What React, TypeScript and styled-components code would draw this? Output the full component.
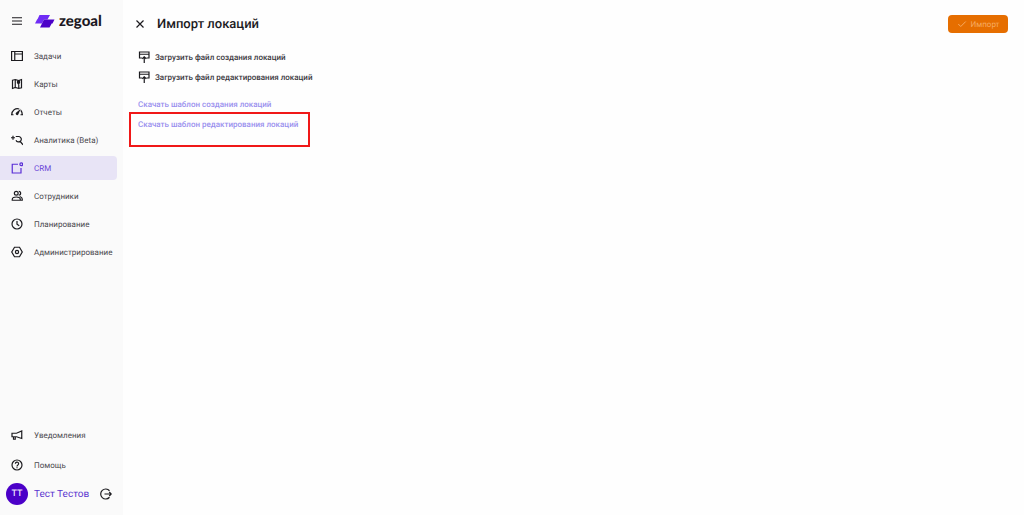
import React from "react";
import styled, { createGlobalStyle, css } from "styled-components";

const GlobalStyle = createGlobalStyle`
  * { box-sizing: border-box; }
  body {
    margin: 0;
    background: #fefefe;
    color: #1c1b1f;
    font-family: Roboto, "Liberation Sans", sans-serif;
    text-rendering: geometricPrecision;
  }
  button { font-family: inherit; text-rendering: inherit; }
`;

const Page = styled.div`
  display: flex;
  min-height: 100vh;
`;

const Sidebar = styled.aside`
  flex: 0 0 123px;
  display: flex;
  flex-direction: column;
  background: #fafafa;
`;

const Brand = styled.div`
  display: flex;
  align-items: center;
  gap: 12px;
  height: 42px;
  padding-left: 11px;
`;

const IconButton = styled.button`
  display: flex;
  flex: none;
  padding: 0;
  border: 0;
  background: none;
  color: #1c1b1f;
  cursor: pointer;
`;

const Logo = styled.a`
  display: flex;
  align-items: center;
  gap: 4px;
  color: #1b1722;
  font: 900 15px/20px Lato, sans-serif;
  text-decoration: none;
`;

const NavList = styled.ul<{ $gap: number }>`
  display: flex;
  flex-direction: column;
  gap: ${(p) => p.$gap}px;
  margin: 0;
  padding: 2px 6px 0 0;
  list-style: none;
`;

const NavLink = styled.a<{ $active?: boolean }>`
  display: flex;
  align-items: center;
  gap: 11px;
  height: 24px;
  padding-left: 11px;
  border-radius: 0 4px 4px 0;
  color: #4a484e;
  font-size: 8px;
  line-height: 13px;
  text-decoration: none;
  white-space: nowrap;
  svg { color: #1c1b1f; }
  ${(p) =>
    p.$active &&
    css`
      background: #e8e4f6;
      color: #6a45d6;
      svg { color: #5a2fd6; }
    `}
`;

const SidebarFooter = styled.div`
  margin-top: auto;
`;

const User = styled.div`
  display: flex;
  align-items: center;
  height: 38px;
  padding: 0 11px 4px 6px;
`;

const Avatar = styled.span`
  display: grid;
  place-items: center;
  width: 22px;
  height: 22px;
  border-radius: 50%;
  background: #4b00c8;
  color: #e9defa;
  font-size: 9px;
  font-weight: 500;
`;

const UserName = styled.span`
  flex: 1;
  margin-left: 6px;
  color: #5b35d0;
  font-size: 10px;
  white-space: nowrap;
`;

const Main = styled.main`
  flex: 1;
  min-width: 0;
`;

const Header = styled.header`
  display: flex;
  align-items: center;
  gap: 11px;
  height: 47px;
  padding: 1px 16px 0 11px;
`;

const Title = styled.h1`
  flex: 1;
  margin: 0;
  padding-top: 2px;
  font-size: 13px;
  font-weight: 500;
  line-height: 20px;
`;

const ImportButton = styled.button`
  display: flex;
  align-items: center;
  justify-content: center;
  gap: 4px;
  width: 60px;
  height: 18px;
  padding: 0;
  border: 0;
  border-radius: 4px;
  background: #e66e00;
  color: #f6ab62;
  font-size: 8px;
  font-weight: 400;
`;

const Actions = styled.div`
  display: flex;
  flex-direction: column;
  align-items: flex-start;
  padding: 0 15px;
`;

const UploadButton = styled.button`
  display: flex;
  align-items: center;
  gap: 5px;
  height: 20px;
  padding: 0;
  border: 0;
  background: none;
  color: #3b393f;
  font-size: 8px;
  font-weight: 500;
  cursor: pointer;
  svg { color: #1c1b1f; }
`;

const Templates = styled.div`
  display: flex;
  flex-direction: column;
  align-items: flex-start;
  margin-top: 8px;
`;

const TemplateLink = styled.a<{ $highlighted?: boolean }>`
  position: relative;
  color: #9a90ee;
  font-size: 8px;
  font-weight: 500;
  line-height: 20px;
  text-decoration: none;
  ${(p) =>
    p.$highlighted &&
    css`
      &::after {
        content: "";
        position: absolute;
        inset: -3px -12px -12px -9px;
        border: 2px solid #f01818;
      }
    `}
`;

function Icon({ children, size = 12 }: { children: React.ReactNode; size?: number }) {
  return (
    <svg
      width={size}
      height={size}
      viewBox="0 0 24 24"
      fill="none"
      stroke="currentColor"
      strokeWidth="2.4"
      aria-hidden="true"
    >
      {children}
    </svg>
  );
}

const icons = {
  tasks: <path d="M1.2 3h21.600v18H1.200zM7.500 3v18M7.500 8h15" />,
  maps: (
    <>
      <path d="M3 4.500 8.500 3l7 2L21 3v16.500L15.500 21l-7-2L3 21zM8.500 3v16M15.500 13v8" />
      <path d="M15 4.500a3.500 3.500 0 0 1 3.500 3.500c0 2.500-3.500 6-3.500 6s-3.500-3.500-3.500-6A3.500 3.500 0 0 1 15 4.500z" fill="currentColor" stroke="none" />
    </>
  ),
  reports: (
    <>
      <path d="M1.500 17.500C1.500 9 9 3.500 16.500 6M19.500 8.500c2 2.200 3 5.200 3 9M0 17.500h5M19 17.500h5" />
      <path d="m19.500 5.500-5 11.500a2.800 2.800 0 1 1-4.500-3.500z" fill="currentColor" stroke="none" />
    </>
  ),
  analytics: (
    <>
      <path d="M9.500 5H16a5.500 5.500 0 1 1-6 7.500M18.500 15 24 21.500" />
      <path d="M0 7.500h8M4 3.500v8" />
    </>
  ),
  crm: (
    <>
      <path d="M14 4.500H2.500V22H20V12" />
      <circle cx="20.500" cy="4.500" r="2.800" />
    </>
  ),
  staff: (
    <>
      <circle cx="10.500" cy="6.500" r="3.800" />
      <path d="M15.500 2.700a3.800 3.800 0 0 1 0 7.600M2.500 20.500v-2c0-3 4-4.500 8-4.500s8 1.500 8 4.500v2zM17.500 13c3 .8 5 2.500 5 5v2.500h-4" />
    </>
  ),
  planning: (
    <>
      <circle cx="12" cy="12" r="10" />
      <path d="M12 6v6.500l4.500 3" />
    </>
  ),
  admin: (
    <>
      <path d="M7 2.500h10L22.500 12 17 21.500H7L1.500 12z" />
      <circle cx="12" cy="12" r="3.200" />
    </>
  ),
  notices: <path d="M2 8.500h9L21.500 4v15L11 15.500H2zM5 15.500v5h3.500v-5" />,
  help: (
    <>
      <circle cx="12" cy="12" r="10" />
      <path d="M8.800 9.500a3.200 3.200 0 1 1 5 2.600c-1.200.8-1.800 1.400-1.800 2.900M12 16.500v2.200" />
    </>
  ),
};

type MenuItem = { icon: keyof typeof icons; label: string; active?: boolean };

const mainItems: MenuItem[] = [
  { icon: "tasks", label: "Задачи" },
  { icon: "maps", label: "Карты" },
  { icon: "reports", label: "Отчеты" },
  { icon: "analytics", label: "Аналитика (Beta)" },
  { icon: "crm", label: "CRM", active: true },
  { icon: "staff", label: "Сотрудники" },
  { icon: "planning", label: "Планирование" },
  { icon: "admin", label: "Администрирование" },
];

const footerItems: MenuItem[] = [
  { icon: "notices", label: "Уведомления" },
  { icon: "help", label: "Помощь" },
];

function Menu({ items, gap }: { items: MenuItem[]; gap: number }) {
  return (
    <NavList $gap={gap}>
      {items.map((item) => (
        <li key={item.label}>
          <NavLink href="#" $active={item.active} aria-current={item.active ? "page" : undefined}>
            <Icon>{icons[item.icon]}</Icon>
            {item.label}
          </NavLink>
        </li>
      ))}
    </NavList>
  );
}

function UploadIcon() {
  return (
    <Icon>
      <path d="M8 14H3V2h19v12h-5M3 6.500h19M12.500 24V12M8.500 15.500l4-4 4 4" />
    </Icon>
  );
}

export default function App() {
  return (
    <>
      <GlobalStyle />
      <Page>
        <Sidebar>
          <Brand>
            <IconButton aria-label="Меню">
              <Icon><path d="M2 5.500h20M2 12h20M2 18.500h20" /></Icon>
            </IconButton>
            <Logo href="#">
              <svg width="20" height="16" viewBox="0 0 20 16" aria-hidden="true">
                <path d="M4.500 2h10.500L12.500 6.500H9L7 10.500H0l2.200-4.200h.3z" fill="#6f2cf5" />
                <path d="M9 6.500h10.500l-2 4h-.8L14.500 14.500H5l2-4z" fill="#4b00c8" />
              </svg>
              zegoal
            </Logo>
          </Brand>
          <nav>
            <Menu items={mainItems} gap={4} />
          </nav>
          <SidebarFooter>
            <Menu items={footerItems} gap={6} />
            <User>
              <Avatar>ТТ</Avatar>
              <UserName>Тест Тестов</UserName>
              <IconButton aria-label="Выйти">
                <Icon><path d="M19 5.500a10 10 0 1 0 0 13M9 12h13M18.500 8l4 4-4 4" /></Icon>
              </IconButton>
            </User>
          </SidebarFooter>
        </Sidebar>
        <Main>
          <Header>
            <IconButton aria-label="Закрыть">
              <Icon><path d="m5 5 14 14M19 5 5 19" /></Icon>
            </IconButton>
            <Title>Импорт локаций</Title>
            <ImportButton disabled>
              <Icon size={10}><path d="m3 12 6 6L21 6" /></Icon>
              Импорт
            </ImportButton>
          </Header>
          <Actions>
            <UploadButton><UploadIcon />Загрузить файл создания локаций</UploadButton>
            <UploadButton><UploadIcon />Загрузить файл редактирования локаций</UploadButton>
            <Templates>
              <TemplateLink href="#">Скачать шаблон создания локаций</TemplateLink>
              <TemplateLink href="#" $highlighted>Скачать шаблон редактирования локаций</TemplateLink>
            </Templates>
          </Actions>
        </Main>
      </Page>
    </>
  );
}
